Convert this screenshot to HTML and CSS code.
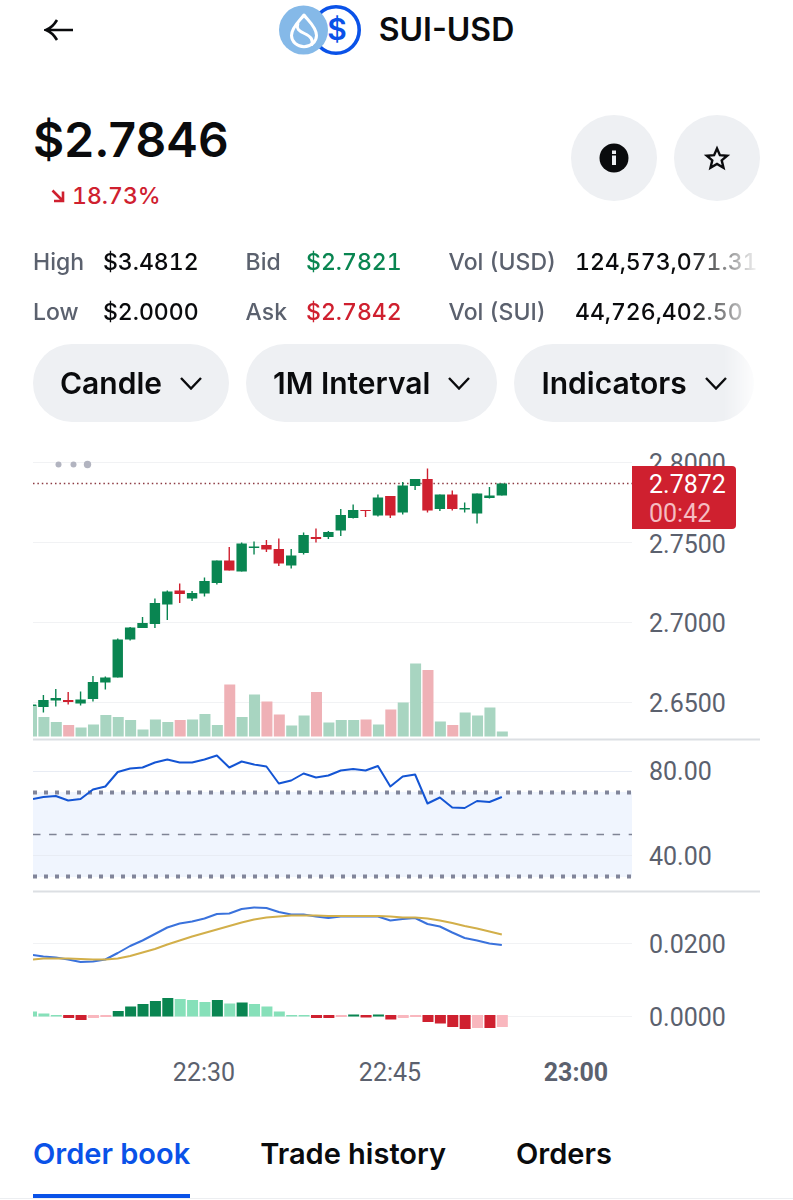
FILE: index.html
```html
<!DOCTYPE html>
<html lang="en">
<head>
    <meta charset="UTF-8">
    <meta name="viewport" content="width=device-width, initial-scale=1.0">
    <title>SUI-USD</title>
    <link rel="stylesheet" href="styles.css">
</head>
<body>
    <header class="header">
        <button class="back" type="button" aria-label="Back">
            <svg width="30" height="22" viewBox="0 0 30 22" fill="none" stroke="currentColor" stroke-width="2.6">
                <path d="M29 11H2M13 1C10 6 6 9.500 2 11C6 12.500 10 16 13 21"/>
            </svg>
        </button>
        <div class="pair">
            <svg width="82" height="50" viewBox="0 0 82 50" aria-hidden="true">
                <circle cx="57" cy="25" r="23.200" fill="#fff" stroke="#0a52e8" stroke-width="3.600"/>
                <text class="coin-sign" x="58" y="35" text-anchor="middle">$</text>
                <circle cx="24.500" cy="25" r="24.500" fill="#85b9e8"/>
                <g fill="none" stroke="#fff" stroke-width="3" stroke-linejoin="round">
                    <path d="M25 10C21 15.500 12.500 22 12.500 30.500a12.500 11.200 0 0 0 25 0C37.500 22 29 15.500 25 10Z"/>
                    <path d="M19 18C17 24 20 26 25.500 28.500C32 31.500 34.500 34.500 32.500 40.500"/>
                </g>
            </svg>
            <h1>SUI-USD</h1>
        </div>
    </header>

    <main>
        <section class="summary">
            <div>
                <div class="price">$2.7846</div>
                <div class="change">
                    <svg width="14" height="14" viewBox="0 0 14 14" fill="none" stroke="currentColor" stroke-width="2.600">
                        <path d="M1.500 1.500L12 12M12 2.500V12H3"/>
                    </svg>
                    <span>18.73%</span>
                </div>
            </div>
            <div class="actions">
                <button class="round" type="button" aria-label="Info">
                    <svg width="30" height="30" viewBox="0 0 30 30">
                        <circle cx="15" cy="15" r="14.500" fill="#0a0b0d"/>
                        <path d="M13 7.500h4v3.500h-4zM13 12.500h4v9.500h-4z" fill="#eef0f3"/>
                    </svg>
                </button>
                <button class="round" type="button" aria-label="Add to watchlist">
                    <svg width="30" height="30" viewBox="0 0 30 30" fill="none" stroke="#0a0b0d" stroke-width="2.400">
                        <path d="M15 5.500L17.900 12.200L25.200 12.700L19.700 17.400L21.500 24.800L15 20.900L8.500 24.800L10.300 17.400L4.800 12.700L12.100 12.200Z"/>
                    </svg>
                </button>
            </div>
        </section>

        <section class="stats">
            <dl>
                <dt>High</dt><dd>$3.4812</dd>
                <dt>Low</dt><dd>$2.0000</dd>
            </dl>
            <dl>
                <dt>Bid</dt><dd class="up">$2.7821</dd>
                <dt>Ask</dt><dd class="down">$2.7842</dd>
            </dl>
            <dl>
                <dt>Vol (USD)</dt><dd>124,573,071.31</dd>
                <dt>Vol (SUI)</dt><dd>44,726,402.50</dd>
            </dl>
        </section>

        <div class="filters">
            <button class="pill" type="button">Candle
                <svg width="22" height="13" viewBox="0 0 22 13" fill="none" stroke="currentColor" stroke-width="2.400"><path d="M1 1L11 11.500L21 1"/></svg>
            </button>
            <button class="pill" type="button">1M Interval
                <svg width="22" height="13" viewBox="0 0 22 13" fill="none" stroke="currentColor" stroke-width="2.400"><path d="M1 1L11 11.500L21 1"/></svg>
            </button>
            <button class="pill" type="button">Indicators
                <svg width="22" height="13" viewBox="0 0 22 13" fill="none" stroke="currentColor" stroke-width="2.400"><path d="M1 1L11 11.500L21 1"/></svg>
            </button>
        </div>

        <svg class="chart" viewBox="0 0 727 660" role="img" aria-label="SUI-USD price, RSI and MACD">
            <!-- price -->
            <g class="grid">
                <path d="M0 22.500H599M0 102.500H599M0 182.500H599M0 262.500H599"/>
            </g>
            <g id="volume"></g>
            <path class="last-price" d="M0 43.500H599"/>
            <g id="candles"></g>
            <g class="more">
                <circle cx="25.500" cy="24.500" r="3"/>
                <circle cx="40.500" cy="24.500" r="3"/>
                <circle cx="54.500" cy="24.500" r="3.700"/>
            </g>
            <g class="axis">
                <text x="616" y="32">2.8000</text>
                <text x="616" y="113">2.7500</text>
                <text x="616" y="192">2.7000</text>
                <text x="616" y="272">2.6500</text>
            </g>
            <path class="tag" d="M599 26H699a4 4 0 0 1 4 4V85a4 4 0 0 1 -4 4H599Z"/>
            <text class="tag-price" x="616" y="53">2.7872</text>
            <text class="tag-time" x="616" y="82">00:42</text>
            <path class="divider" d="M0 299.500H727"/>

            <!-- RSI -->
            <g transform="translate(0 300)">
                <rect class="band" x="0" y="52" width="599" height="85"/>
                <path class="grid" d="M0 31.500H599M0 115.500H599"/>
                <path class="limit" d="M0 52.500H599M0 136.500H599"/>
                <path class="middle" d="M0 94.500H599"/>
                <path id="rsi" class="line rsi"/>
                <text class="axis" x="616" y="40">80.00</text>
                <text class="axis" x="616" y="125">40.00</text>
                <path class="divider" d="M0 151.500H727"/>
            </g>

            <!-- MACD -->
            <g transform="translate(0 450)">
                <path class="grid" d="M0 53.500H599M0 126.500H599"/>
                <g id="histogram"></g>
                <path id="macd" class="line macd"/>
                <path id="signal" class="line signal"/>
                <text class="axis" x="616" y="63">0.0200</text>
                <text class="axis" x="616" y="136">0.0000</text>
            </g>

            <g class="axis times">
                <text x="171" y="641">22:30</text>
                <text x="357" y="641">22:45</text>
                <text class="hour" x="543" y="641">23:00</text>
            </g>
        </svg>

        <nav class="tabs">
            <a class="active" href="#book">Order book</a>
            <a href="#history">Trade history</a>
            <a href="#orders">Orders</a>
        </nav>
    </main>
    <script src="chart.js"></script>
</body>
</html>
```

FILE: styles.css
```css
* {
    box-sizing: border-box;
}
body {
    margin: 0;
    background: #fff;
    color: #0a0b0d;
    font-family: Inter, "Liberation Sans", sans-serif;
}
button {
    border: 0;
    padding: 0;
    background: none;
    color: inherit;
    font: inherit;
    cursor: pointer;
}
svg {
    display: block;
    flex: none;
}
.header {
    display: grid;
    grid-template-columns: 1fr auto 1fr;
    align-items: center;
    padding: 5px 44px 0;
}
.pair {
    display: flex;
    align-items: center;
    gap: 18px;
}
.pair h1 {
    margin: 0;
    font-size: 32px;
    line-height: 50px;
    font-weight: 600;
}
.coin-sign {
    fill: #0a52e8;
    font-size: 30px;
    font-weight: 600;
}
main {
    padding: 0 33px;
}
.summary {
    display: flex;
    justify-content: space-between;
    align-items: flex-start;
    padding-top: 60px;
}
.price {
    font-size: 48px;
    line-height: 50px;
    font-weight: 600;
}
.change {
    display: flex;
    align-items: center;
    gap: 7px;
    margin-top: 15px;
    padding-left: 18px;
    color: #cf202f;
    font-size: 23px;
    line-height: 32px;
    font-weight: 500;
    font-variant-numeric: tabular-nums;
}
.actions {
    display: flex;
    gap: 17px;
}
.round {
    display: flex;
    align-items: center;
    justify-content: center;
    width: 86px;
    height: 86px;
    border-radius: 50%;
    background: #eef0f3;
}
.stats {
    display: flex;
    gap: 47px;
    margin-top: 25px;
    overflow: hidden;
    white-space: nowrap;
    font-size: 23px;
    line-height: 50px;
    font-weight: 500;
    font-variant-numeric: tabular-nums;
    -webkit-mask-image: linear-gradient(to left, transparent, #000 72px);
    mask-image: linear-gradient(to left, transparent, #000 72px);
}
.stats dl {
    display: grid;
    grid-template-columns: auto auto;
    column-gap: 19px;
    flex: none;
    margin: 0;
}
.stats dt {
    color: #5b616e;
}
.stats dd {
    margin: 0;
}
.up {
    color: #098551;
}
.down {
    color: #cf202f;
}
.filters {
    display: flex;
    gap: 17px;
    margin-top: 7px;
    overflow: hidden;
    -webkit-mask-image: linear-gradient(to left, transparent, #000 36px);
    mask-image: linear-gradient(to left, transparent, #000 36px);
}
.pill {
    display: flex;
    align-items: center;
    gap: 18px;
    flex: none;
    height: 78px;
    padding: 0 27px;
    border-radius: 39px;
    background: #eef0f3;
    font-size: 30px;
    font-weight: 600;
}
.chart {
    width: 100%;
    height: auto;
    margin-top: 18px;
    font-family: Roboto, "Liberation Sans", sans-serif;
    font-size: 25px;
}
.grid {
    stroke: #f1f2f4;
    stroke-width: 1;
}
.divider {
    stroke: #dcdfe3;
    stroke-width: 2;
}
.last-price {
    stroke: #8c3a42;
    stroke-width: 1.5;
    stroke-dasharray: 1.5 2.9;
}
.more {
    fill: #b2b4c0;
}
.axis {
    fill: #5b616e;
}
.times {
    text-anchor: middle;
}
.hour {
    font-weight: 700;
}
.tag {
    fill: #cf202f;
}
.tag-price {
    fill: #fff;
}
.tag-time {
    fill: #f5bcc1;
}
.band {
    fill: #f0f5fe;
}
.band + .grid {
    stroke: #e8ecf4;
}
.limit {
    stroke: #81859a;
    stroke-width: 4;
    stroke-dasharray: 4 7;
}
.middle {
    stroke: #7f8495;
    stroke-width: 1.5;
    stroke-dasharray: 7.5 8.6;
}
.line {
    fill: none;
    stroke-width: 2;
    stroke-linejoin: round;
}
.rsi {
    stroke: #1455d4;
}
.macd {
    stroke: #3a72dc;
}
.signal {
    stroke: #d2af4a;
}
.tabs {
    display: flex;
    gap: 70px;
    margin: 0 -33px;
    padding: 0 33px;
    border-bottom: 1px solid #eceef1;
    font-size: 29px;
    line-height: 40px;
    font-weight: 600;
}
.tabs a {
    padding: 34px 0 20px;
    border-bottom: 4px solid transparent;
    color: inherit;
    text-decoration: none;
}
.tabs .active {
    border-color: #0a52e8;
    color: #0a52e8;
}
```

FILE: chart.js
```javascript
const NS = 'http://www.w3.org/2000/svg';
const GREEN = '#098551';
const RED = '#cf202f';

// high, body top, body bottom, low, volume top, direction
const candles = [
    [264.5, 264.5, 266, 266, 265, 1],
    [255, 260, 267, 272.5, 277, 1],
    [249, 258, 260.5, 266.5, 282, 1],
    [252, 260, 262, 264.5, 285, 0],
    [251.5, 259.5, 263.5, 265.5, 287.5, 1],
    [236, 242, 259, 261.5, 284.5, 1],
    [236.5, 237.5, 242.5, 249.5, 275, 1],
    [198.5, 199.5, 237.5, 237.5, 277, 1],
    [187, 187.5, 199.5, 200.5, 280, 1],
    [177, 183, 188, 188, 289.5, 1],
    [158.5, 163, 184, 188, 279.5, 1],
    [150.5, 151.5, 164.5, 180, 282, 1],
    [143.5, 150.5, 154, 163, 280, 0],
    [151, 153, 158.5, 161, 279.5, 1],
    [137.5, 141, 153.5, 156.5, 274, 1],
    [120.5, 120.5, 143, 144.5, 285, 1],
    [107, 120.5, 130.5, 130.5, 244.5, 0],
    [102.5, 103.5, 131.5, 131.5, 277, 1],
    [101.5, 106.5, 108, 114.5, 254.5, 1],
    [100, 105, 109.5, 112, 261.5, 0],
    [98.5, 109, 123.5, 126, 274.5, 0],
    [109, 115.5, 125.5, 128.5, 285.5, 1],
    [92.5, 95, 113, 114.5, 275.5, 1],
    [88.5, 97, 99, 102.5, 252, 0],
    [91, 92, 97, 99, 282.5, 1],
    [69, 75, 90.5, 96, 280, 1],
    [64.5, 70, 78, 78.5, 280, 1],
    [70, 70, 71, 77, 279.5, 0],
    [54.5, 57.5, 75.5, 76.5, 284.5, 1],
    [56, 56, 75.5, 78, 269.5, 0],
    [42, 45.5, 72.5, 74.5, 262.5, 1],
    [39, 39, 46, 50, 223.5, 1],
    [28.5, 39, 70.5, 72.5, 230, 0],
    [54.5, 54.5, 69, 71, 281.5, 1],
    [50.5, 54.5, 69, 70.5, 285, 0],
    [62.5, 68, 69.5, 72.5, 272.5, 1],
    [53.5, 53.5, 73.5, 83.5, 275.5, 1],
    [47, 55.5, 58, 58.5, 267.5, 1],
    [43.5, 43.5, 55.5, 55.5, 291.5, 1]
];

const rsi = [59, 57, 56, 60.5, 59, 49.5, 46.5, 32, 28.5, 27.5, 22.5, 19.5, 22.5,
    22.5, 19.5, 15.5, 27.5, 21.5, 24.5, 26.5, 43.5, 40.5, 33.5, 37.5, 35.5, 30.5,
    29, 30.5, 26, 46.5, 36.5, 34.5, 63.5, 57.5, 67.5, 68, 61, 62, 57];

const macd = [65, 66.5, 67.5, 69.5, 72, 71.5, 69.5, 63, 56, 50.5, 44, 37.5, 33.5,
    31.5, 28.5, 24, 23.5, 19, 17.5, 18, 22, 24.5, 24.5, 26.5, 28, 26.5,
    26.5, 26.5, 26.5, 30.5, 29, 28, 34, 36.5, 42.5, 48, 50.5, 53.5, 55];

const signal = [69.5, 68.5, 68.5, 68.5, 69, 69.5, 69.5, 68.5, 66, 62.5, 59, 54.5, 50.5,
    46.5, 43, 39.5, 36, 32.5, 29.5, 27.5, 26.5, 25.5, 25.5, 25.5, 26, 26,
    26, 26, 26, 26.5, 27.5, 27.5, 28.5, 30.5, 33, 36, 38.5, 41.5, 44.5];

// bar height, 1 = strong colour
const histogram = [[5, 0], [3, 0], [1.5, 0], [-3, 1], [-5, 1], [-3, 0], [-2, 0],
    [5.5, 1], [10, 1], [12.5, 1], [15.5, 1], [18.5, 1], [17.5, 0], [16.5, 0],
    [14.5, 0], [16.5, 1], [13, 0], [14, 1], [12.5, 0], [10, 0], [5, 0],
    [1.5, 0], [1.5, 0], [-3, 1], [-3, 1], [-2, 0], [2, 1], [-2.5, 1],
    [2, 1], [-4.5, 1], [-3, 0], [-2, 0], [-7, 1], [-8.5, 1], [-12, 1],
    [-14, 1], [-13, 0], [-13, 1], [-12, 0]];

const x = i => 10.4 + 12.39 * (i - 1);

function bar(parent, center, top, width, height, fill) {
    const left = Math.max(0, center - width / 2);
    const rect = document.createElementNS(NS, 'rect');
    rect.setAttribute('x', left);
    rect.setAttribute('y', top);
    rect.setAttribute('width', center + width / 2 - left);
    rect.setAttribute('height', height);
    rect.setAttribute('fill', fill);
    document.getElementById(parent).appendChild(rect);
}

function line(id, values) {
    const points = values.map((y, i) => Math.max(0, x(i)) + ' ' + y);
    document.getElementById(id).setAttribute('d', 'M' + points.join('L'));
}

candles.forEach(([high, top, bottom, low, volume, up], i) => {
    const color = up ? GREEN : RED;
    bar('volume', x(i) + 0.5, volume, 11, 296.5 - volume, up ? '#a8d5c1' : '#efb1b6');
    if (i > 0) {
        bar('candles', x(i), high, 1.4, low - high, color);
    }
    bar('candles', x(i), top, 10.4, bottom - top, color);
});

histogram.forEach(([height, strong], i) => {
    if (height > 0) {
        bar('histogram', x(i) + 0.5, 126.5 - height, 11, height, strong ? GREEN : '#86e0b9');
    } else {
        bar('histogram', x(i) + 0.5, 125, 11, -height, strong ? RED : '#f9b7be');
    }
});

line('rsi', rsi);
line('macd', macd);
line('signal', signal);
```
